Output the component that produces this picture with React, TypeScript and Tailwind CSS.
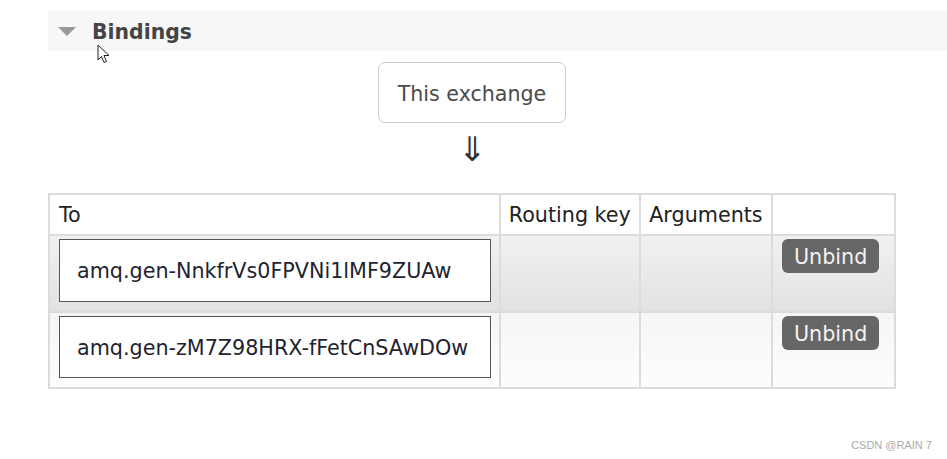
export default function App() {
  const rows = ["amq.gen-NnkfrVs0FPVNi1lMF9ZUAw", "amq.gen-zM7Z98HRX-fFetCnSAwDOw"];
  return (
    <div className="relative w-[947px] h-[459px] bg-white overflow-hidden pt-[10px] text-[#222]" style={{ fontFamily: '"DejaVu Sans", Verdana, sans-serif' }}>
      {/* section header */}
      <div className="ml-[48px] h-[41px] bg-[#f7f7f7] flex items-center">
        <svg width="18" height="10" viewBox="0 0 18 10" className="ml-[10px] mt-[2px]">
          <polygon points="0,0 18,0 9,9" fill="#999" />
        </svg>
        <span className="ml-[16px] pt-[3px] text-[20.4px] font-bold text-[#444]">Bindings</span>
      </div>

      {/* mouse cursor */}
      <svg width="14" height="21" viewBox="0 0 14 21" className="absolute left-[97px] top-[44px]">
        <path d="M1 1 L1 16 L4.5 12.5 L7 18.5 L9.5 17.5 L7 11.5 L12 11.5 Z" fill="#fff" stroke="#222" strokeWidth="1" strokeLinejoin="round" />
      </svg>

      <div className="ml-[48px] w-[848px] flex flex-col items-center">
        <div className="mt-[11px] h-[61px] px-[19px] pt-[3px] flex items-center border border-[#ccc] rounded-[7px] text-[20.6px] text-[#4a4a4a] bg-white">
          This exchange
        </div>
        <div className="mt-[5px] h-[42px] text-[34px] leading-[42px] font-light text-[#333]">⇓</div>

        <table className="mt-[23px] border-collapse border-2 border-[#dcdcdc] text-[20.7px]">
          <thead>
            <tr className="h-[41px] bg-white">
              <th className="w-[452px] border-2 border-[#dcdcdc] text-left font-normal pl-[9px] pt-[3px]">To</th>
              <th className="w-[141px] border-2 border-[#dcdcdc] text-left font-normal pl-[8px] pt-[3px]">Routing key</th>
              <th className="w-[132px] border-2 border-[#dcdcdc] text-left font-normal pl-[8px] pt-[3px]">Arguments</th>
              <th className="w-[123px] border-2 border-[#dcdcdc]"></th>
            </tr>
          </thead>
          <tbody>
            {rows.map((name, i) => (
              <tr key={name} className={i === 0 ? "h-[77px] bg-gradient-to-b from-[#f1f1f1] to-[#e2e2e2]" : "h-[76px] bg-gradient-to-b from-[#f6f6f6] to-[#fdfdfd]"}>
                <td className="border-2 border-[#dcdcdc] align-top pl-[9px] pr-[8px] pt-[3px]">
                  <div className={`${i === 0 ? "h-[63px]" : "h-[62px]"} border border-[#555] bg-white flex items-center pl-[17px] pt-[3px] text-[#1e2430]`}>
                    {name}
                  </div>
                </td>
                <td className="border-2 border-[#dcdcdc]"></td>
                <td className="border-2 border-[#dcdcdc]"></td>
                <td className="border-2 border-[#dcdcdc] align-top pl-[9px] pt-[3px]">
                  <div className="w-[97px] h-[34px] rounded-[6px] bg-[#666] text-[#f2f2f2] pt-[4px] flex items-center justify-center">Unbind</div>
                </td>
              </tr>
            ))}
          </tbody>
        </table>
      </div>

      <div className="absolute right-[15px] top-[437px] text-[11px] text-[#aaa]" style={{ fontFamily: '"Liberation Sans", Arial, sans-serif' }}>
        CSDN @RAIN 7
      </div>
    </div>
  );
}
